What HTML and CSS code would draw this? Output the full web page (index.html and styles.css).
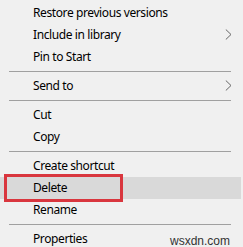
FILE: index.html
```html
<!DOCTYPE html>
<html>
<head>
<meta charset="utf-8">
<link rel="stylesheet" href="styles.css">
</head>
<body>
<div class="menu">
  <div class="item">Restore previous versions</div>
  <div class="item">Include in library<svg class="chev" width="7" height="11" viewBox="0 0 7 11"><path d="M0.8 0.5 L6 5.5 L0.8 10.5" fill="none" stroke="#666" stroke-width="1"/></svg></div>
  <div class="item">Pin to Start</div>
  <div class="sep"></div>
  <div class="item">Send to<svg class="chev" width="7" height="11" viewBox="0 0 7 11"><path d="M0.8 0.5 L6 5.5 L0.8 10.5" fill="none" stroke="#666" stroke-width="1"/></svg></div>
  <div class="sep"></div>
  <div class="item">Cut</div>
  <div class="item">Copy</div>
  <div class="sep"></div>
  <div class="item">Create shortcut</div>
  <div class="item hover">Delete<span class="mark"></span></div>
  <div class="item">Rename</div>
  <div class="sep"></div>
  <div class="item">Properties<span class="wm">wsxdn.com</span></div>
</div>
</body>
</html>
```
FILE: styles.css
```css
html, body {
  margin: 0;
  padding: 0;
  background: #f0f0f0;
  overflow: hidden;
}
.menu {
  padding-top: 2px;
  width: 241px;
  font-family: "Noto Sans", "Open Sans", sans-serif;
  font-size: 12px;
  letter-spacing: -0.4px;
  color: #000;
}
.item {
  position: relative;
  height: 22px;
  line-height: 22px;
  padding-left: 33px;
  display: flex;
  align-items: center;
}
.item.hover {
  background: #d9d9d9;
}
.chev {
  position: absolute;
  left: 225px;
  top: 5px;
}
.sep {
  height: 7px;
  display: flex;
  align-items: center;
  padding: 0 10px 0 9px;
}
.sep::before {
  content: "";
  flex: 1;
  height: 1px;
  background: #a0a0a0;
}
.mark {
  position: absolute;
  left: 4px;
  top: -3px;
  width: 113px;
  height: 22px;
  border: 3px solid #d9363e;
}
.wm {
  position: absolute;
  left: 170px;
  top: 2px;
  font-family: "Liberation Sans", Arial, sans-serif;
  font-size: 12px;
  letter-spacing: 0;
  color: #333;
}
```
